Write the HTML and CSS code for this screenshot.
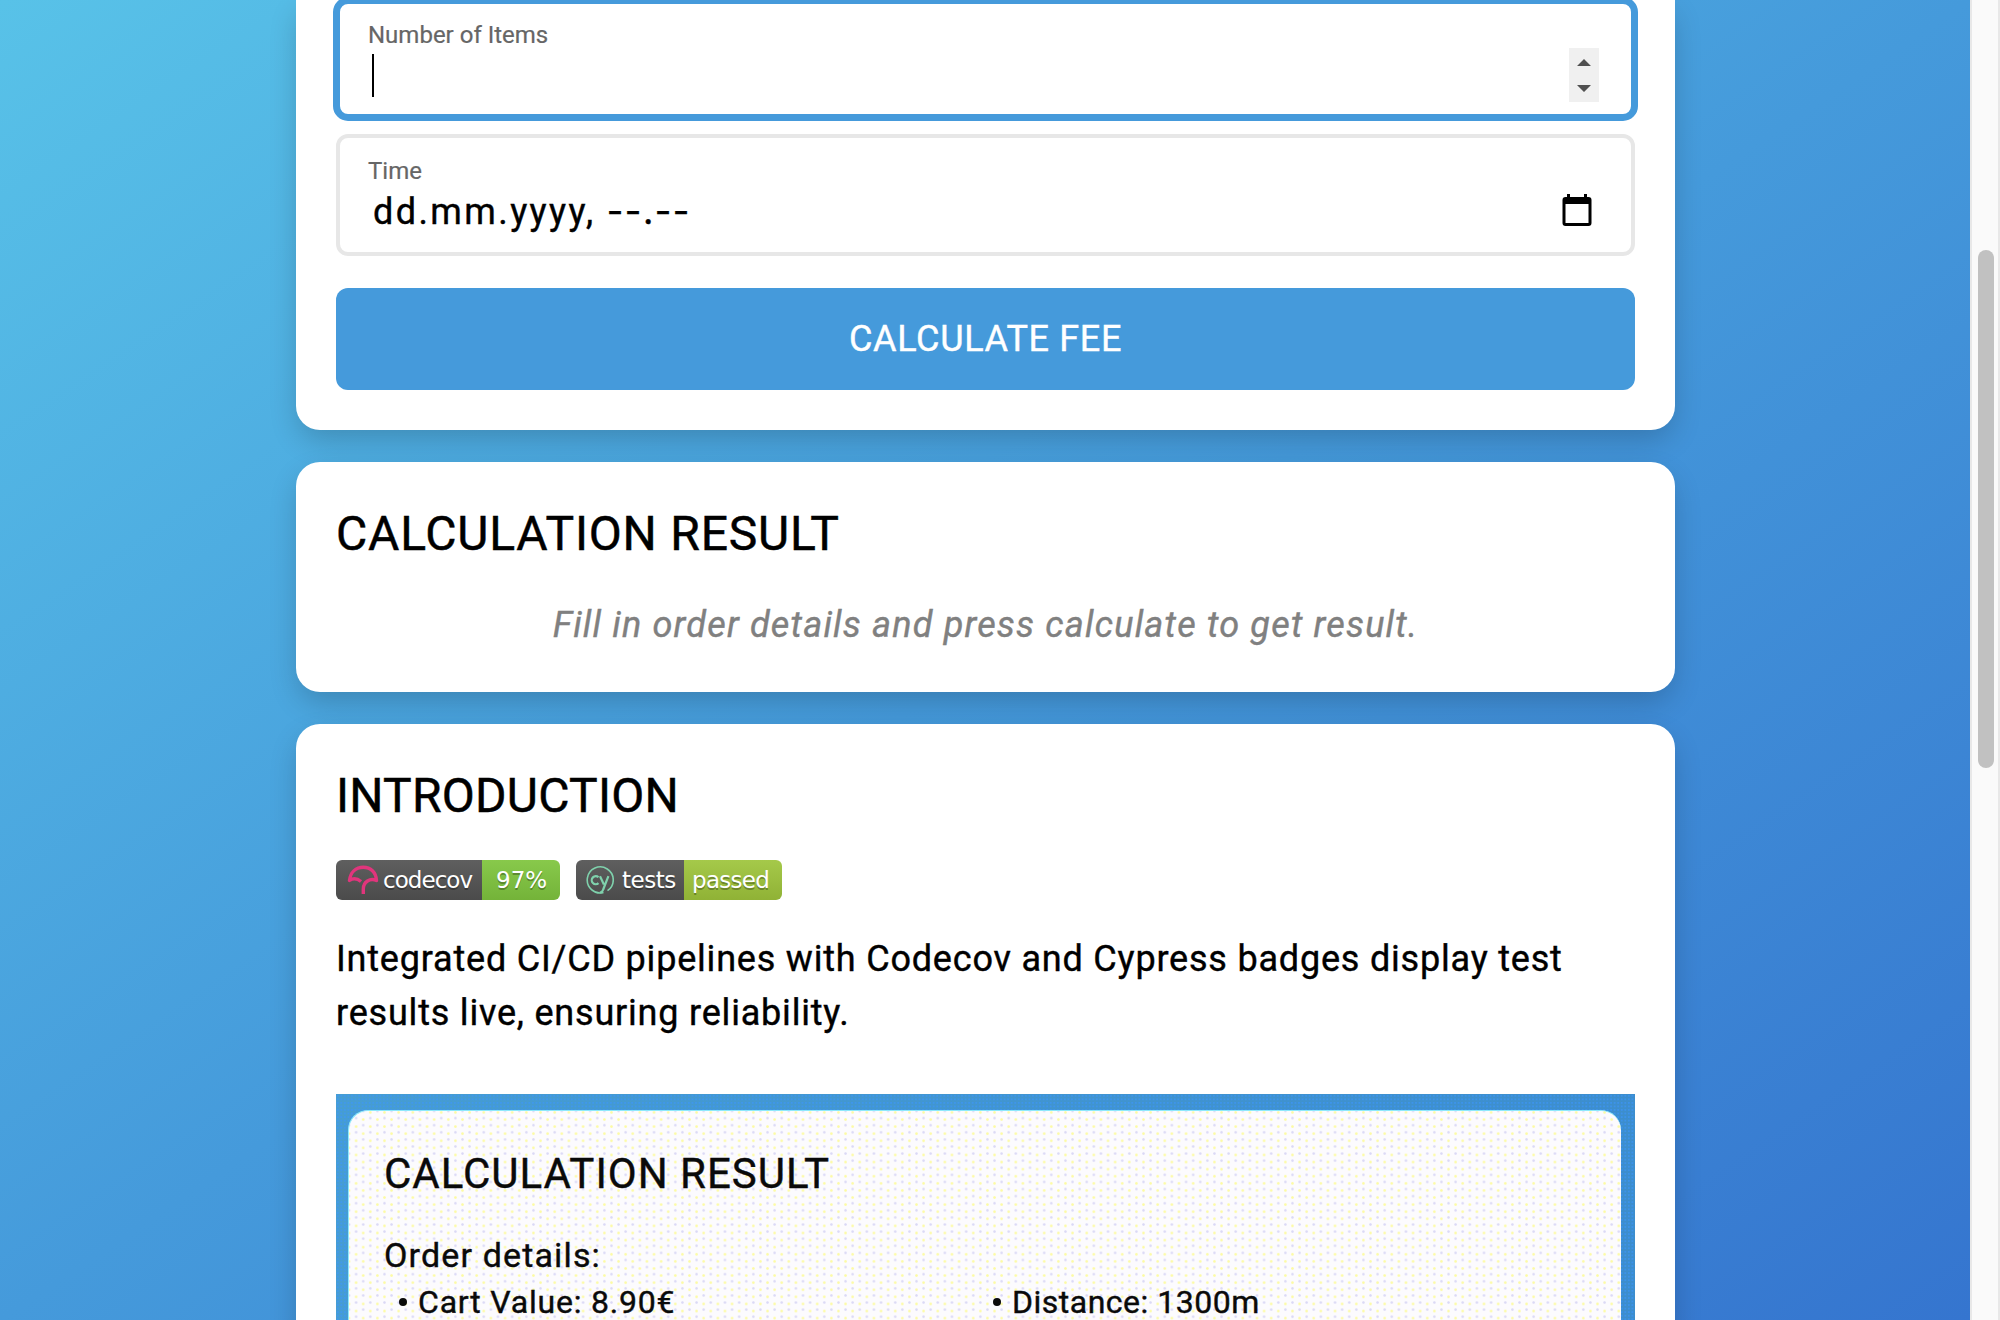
FILE: index.html
```html
<!DOCTYPE html>
<html lang="en">
<head>
<meta charset="utf-8">
<title>Delivery Fee Calculator</title>
<link rel="stylesheet" href="styles.css">
</head>
<body>
<div class="viewport">
  <main class="page">
    <section class="card card-form">
      <label class="field field-focused">
        <span class="field-label">Number of Items</span>
        <span class="field-row">
          <span class="caret"></span>
          <svg class="spinner" viewBox="0 0 30 54"><rect width="30" height="54" fill="#f0f0f0"/><path d="M8 18 15 11l7 7zM8 37h14l-7 7z" fill="#505050"/></svg>
        </span>
      </label>
      <label class="field">
        <span class="field-label">Time</span>
        <span class="field-row">
          <span class="field-value">dd.mm.yyyy, <span class="dashes">--.--</span></span>
          <svg class="calendar" viewBox="0 0 30 32"><path d="M5 0h3v3h14V0h3v3h1.500q3 0 3 3v23q0 3-3 3h-23q-3 0-3-3V6q0-3 3-3H5zM3.500 10v19h23V10z" fill="#000" fill-rule="evenodd"/></svg>
        </span>
      </label>
      <button class="submit">CALCULATE FEE</button>
    </section>

    <section class="card">
      <h2 class="title">CALCULATION RESULT</h2>
      <p class="placeholder">Fill in order details and press calculate to get result.</p>
    </section>

    <section class="card card-intro">
      <h2 class="title title-intro">INTRODUCTION</h2>
      <div class="badges">
        <div class="badge">
          <span class="badge-name badge-codecov">
            <svg class="umbrella" viewBox="0 0 32 30"><path d="M14 16.500Q8 11.500 2.500 15.500C3.500 7 9 2.300 16.300 2.300S29 7 29.500 15.500C23 12.500 16.300 17 16.300 24v5" fill="none" stroke="#e0357c" stroke-width="3.400" stroke-linejoin="round"/></svg>
            <span>codecov</span>
          </span>
          <span class="badge-value value-coverage">97%</span>
        </div>
        <div class="badge">
          <span class="badge-name badge-tests">
            <svg class="cypress" viewBox="0 0 28 28" fill="none" stroke="#7fd1ac"><path d="M17.500 26.500A13 13 0 1 1 21.500 24.700" stroke-width="1.600"/><path d="M12.500 11.300a4 4 0 1 0 0 5.800M14 10.200l3.900 8.300M22.400 10.200l-5.200 13.300q-1 2.800-3.400 3" stroke-width="2.200"/></svg>
            <span>tests</span>
          </span>
          <span class="badge-value value-passed">passed</span>
        </div>
      </div>
      <p class="copy">Integrated CI/CD pipelines with Codecov and Cypress badges display test results live, ensuring reliability.</p>
      <div class="demo">
        <div class="demo-card">
          <h3 class="demo-title">CALCULATION RESULT</h3>
          <p class="demo-subtitle">Order details:</p>
          <ul class="demo-list">
            <li>Cart Value: 8.90€</li>
            <li class="distance">Distance: 1300m</li>
          </ul>
        </div>
      </div>
    </section>
  </main>
  <div class="scrollbar"><div class="thumb"></div></div>
</div>
</body>
</html>
```
FILE: styles.css
```css
* { box-sizing: border-box; }
body { margin: 0; font-family: Roboto, "Liberation Sans", sans-serif; color: #000; }
h2, h3, p, ul { margin: 0; padding: 0; font-weight: 400; }
svg { display: block; flex: none; }

.viewport { display: flex; width: 2000px; height: 1320px; overflow: hidden; }
.page {
  flex: 1;
  display: flex;
  flex-direction: column;
  gap: 32px;
  padding: 0 295px 0 296px;
  background: linear-gradient(to bottom right, #58c2e8, #459adb 50%, #3575cf);
}
.card {
  flex: none;
  padding: 40px;
  border-radius: 24px;
  background: #fff;
  box-shadow: 0 12px 30px -3px rgba(0, 0, 0, .2);
}
.card-form { padding-top: 0; border-radius: 0 0 24px 24px; }
.card-intro { height: 700px; }

.field {
  display: block;
  height: 122px;
  margin-bottom: 32px;
  padding: 18px 28px 0;
  border: 4px solid #e7e7e7;
  border-radius: 12px;
}
.field-focused {
  height: 124px;
  margin: -3px -3px 13px;
  padding-top: 16px;
  border: 7px solid #459adb;
  border-radius: 15px;
}
.field-label { display: block; height: 30px; font-size: 24px; line-height: 30px; color: #666; -webkit-text-stroke: .2px; }
.field-row { display: flex; justify-content: space-between; align-items: flex-start; }
.field-value { padding-left: 5px; font-size: 36px; line-height: 50px; letter-spacing: 2.4px; -webkit-text-stroke: .4px; }
.dashes { font-family: Inter, sans-serif; letter-spacing: 1.500px; }
.caret { width: 2px; height: 43px; margin: 4px 0 0 4px; background: #000; }
.spinner { width: 30px; height: 54px; margin: -2px 4px 0 0; }
.calendar { width: 30px; height: 32px; margin: 8px 11px 0 0; }
.submit {
  display: block;
  width: 100%;
  height: 102px;
  padding: 0;
  border: 0;
  border-radius: 12px;
  background: #459adb;
  color: #fff;
  font: 400 36px/102px Roboto, sans-serif;
  letter-spacing: .65px;
  -webkit-text-stroke: .4px;
}

.title { font-size: 48px; line-height: 64px; margin-bottom: 32px; letter-spacing: .8px; -webkit-text-stroke: .5px; }
.title-intro { letter-spacing: .25px; }
.placeholder {
  font-size: 36px;
  line-height: 54px;
  font-style: italic;
  letter-spacing: 1.200px;
  color: #808080;
  text-align: center;
  -webkit-text-stroke: .4px;
}

.badges { display: flex; gap: 16px; margin-bottom: 32px; }
.badge {
  display: flex;
  height: 40px;
  border-radius: 6px;
  overflow: hidden;
  color: #fff;
  font: 23px/40px "DejaVu Sans", sans-serif;
  text-shadow: 0 2px 0 rgba(1, 1, 1, .3);
}
.badge-name { display: flex; align-items: center; background: linear-gradient(#5f5f5f, #4b4b4b); }
.badge-codecov { width: 146px; padding-left: 11px; gap: 4px; letter-spacing: -.95px; }
.badge-tests { width: 108px; padding-left: 10px; gap: 8px; letter-spacing: -.5px; }
.umbrella { width: 32px; height: 30px; }
.cypress { width: 28px; height: 28px; }
.value-coverage { width: 78px; padding-left: 14px; background: linear-gradient(#88c94b, #74b339); }
.value-passed { width: 98px; padding-left: 8px; letter-spacing: -.7px; background: linear-gradient(#a5c94a, #90b236); }

.copy { font-size: 36px; line-height: 54px; margin-bottom: 54px; letter-spacing: .8px; -webkit-text-stroke: .4px; }

.demo {
  padding: 16px 14px 0 12px;
  background:
    radial-gradient(circle, rgba(60, 150, 255, .6) .8px, transparent 1.400px) 0 0 / 3.550px 3.550px,
    linear-gradient(100deg, #469dd2, #3c8dcd);
}
.demo-card {
  height: 300px;
  padding: 33px 35px;
  border-top: 1px solid #8fe9fb;
  border-left: 1px solid #8fe9fb;
  border-radius: 20px 20px 0 0;
  color: #0a0a0a;
  -webkit-text-stroke: .4px;
  background:
    radial-gradient(circle, #dad8f6 .8px, transparent 1.600px) 0 0 / 14.200px 14.200px,
    radial-gradient(circle, #dad8f6 .8px, transparent 1.600px) 7.100px 7.100px / 14.200px 14.200px,
    radial-gradient(circle, #fdfba0 .8px, transparent 1.700px) 0 8.500px / 14.200px 14.200px,
    radial-gradient(circle, #fdfba0 .8px, transparent 1.700px) 7.100px 1.400px / 14.200px 14.200px,
    #fcfbfe;
}
.demo-title { font-size: 42px; line-height: 60px; letter-spacing: 1px; }
.demo-subtitle { margin-top: 28px; font-size: 34px; line-height: 46px; letter-spacing: 1.150px; }
.demo-list {
  display: grid;
  grid-template-columns: 594px 1fr;
  margin-top: 1px;
  list-style: none;
  font-size: 32px;
  line-height: 46px;
  letter-spacing: .8px;
}
.distance { letter-spacing: .5px; }
.demo-list li { display: flex; align-items: center; padding-left: 15px; }
.demo-list li::before { content: ""; width: 8px; height: 8px; margin-right: 11px; border-radius: 50%; background: #0a0a0a; }

.scrollbar { flex: none; width: 30px; padding: 250px 4px 0 6px; border: solid #e8e8e8; border-width: 0 2px; background: #fafafa; }
.thumb { width: 16px; height: 518px; border-radius: 8px; background: #c1c1c1; }
```
